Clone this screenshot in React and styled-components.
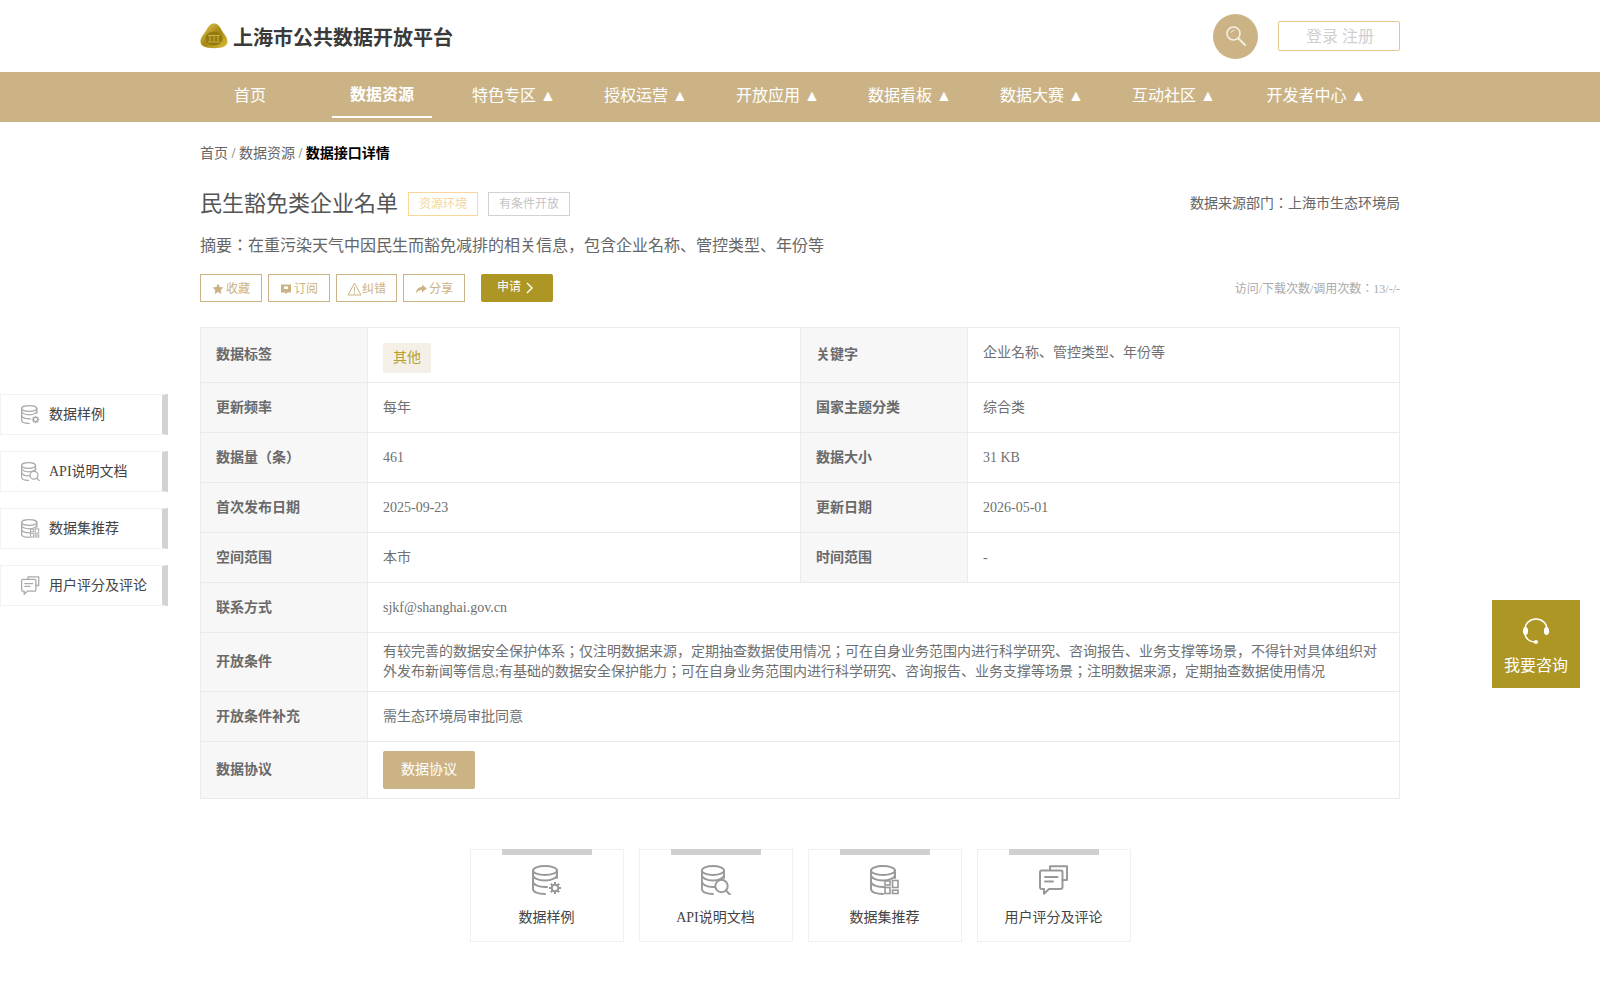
import React from "react";
import styled, { createGlobalStyle } from "styled-components";

const GOLD = "#cbb385";
const OLIVE = "#ad9623";
const BORDER = "#ebebeb";

const navItems = [
  { label: "首页" },
  { label: "数据资源", active: true },
  { label: "特色专区 ▲" },
  { label: "授权运营 ▲" },
  { label: "开放应用 ▲" },
  { label: "数据看板 ▲" },
  { label: "数据大赛 ▲" },
  { label: "互动社区 ▲" },
  { label: "开发者中心 ▲", wide: true },
];

const actions = [
  { label: "收藏", icon: "star", width: 62 },
  { label: "订阅", icon: "book", width: 62 },
  { label: "纠错", icon: "warn", width: 61, tight: true },
  { label: "分享", icon: "share", width: 62 },
];

const sections = [
  { label: "数据样例", icon: "gear" },
  { label: "API说明文档", icon: "search" },
  { label: "数据集推荐", icon: "grid" },
  { label: "用户评分及评论", icon: "chat" },
];

const Glyph = ({ name, size }) => {
  return (
    <svg width={size} height={size} viewBox="0 0 30 30" fill="none" stroke="currentColor" strokeWidth="2" strokeLinecap="round">
      {name === "chat" ? (
        <g strokeLinejoin="round">
          <path d="M11 5 V1.2 H28 V15 H23.5" />
          <path d="M2.5 5.5 H22 Q23.5 5.5 23.5 7 V22 Q23.5 24 21.5 24 H10 L5 28.8 V24 H3 Q1 24 1 22 V7 Q1 5.5 2.5 5.5 Z" />
          <path d="M6 12 H18.5 M6 16.5 H14" />
        </g>
      ) : (
        <g transform={name === "search" ? "scale(.92 1)" : undefined}>
          <ellipse cx="13" cy="5.5" rx="12" ry="4.5" />
          <path d="M1 5.5 V24 C1 27 6 29 13 29" />
          <path d="M25 5.5 V13" />
          <path d="M1 10 C1 13 6 15.5 13 15.5 C19 15.5 25 13 25 10" />
          <path d="M1 16.5 C1 19.5 6 22 13 22 L15 22" />
        </g>
      )}
      {name === "gear" && (
        <g>
          <circle cx="23" cy="23" r="6.8" fill="#fff" stroke="none" />
          <circle cx="23" cy="23" r="3.3" />
          <path strokeLinecap="butt" strokeWidth="2.2" d="M23 17v2.5M23 26.5v2.5M17 23h2.5M26.5 23h2.5M18.8 18.8l1.7 1.7M25.5 25.5l1.7 1.7M27.2 18.8l-1.7 1.7M20.5 25.5l-1.7 1.7" />
        </g>
      )}
      {name === "search" && (
        <g>
          <circle cx="20.5" cy="21" r="6.2" fill="#fff" />
          <path d="M25 25.5 L28.8 29.5" />
        </g>
      )}
      {name === "grid" && (
        <g strokeWidth="1.6" fill="#fff" strokeLinecap="butt">
          <rect x="15" y="16" width="5" height="4" />
          <rect x="22.5" y="15.5" width="5.5" height="7" />
          <rect x="15" y="22.5" width="5" height="6" />
          <rect x="22.5" y="25.2" width="5.5" height="3.3" />
        </g>
      )}
    </svg>
  );
};

const ActionGlyph = ({ name }) => {
  if (name === "star")
    return (
      <svg width="12" height="12" viewBox="0 0 12 12" fill="currentColor">
        <path d="M6 .6 7.7 4l3.8.5-2.8 2.6.7 3.8L6 9.1l-3.4 1.8.7-3.8L.5 4.5 4.3 4Z" />
      </svg>
    );
  if (name === "book")
    return (
      <svg width="12" height="12" viewBox="0 0 12 12" fill="currentColor">
        <path fillRule="evenodd" d="M1 1.5h10v8H7.5L6 11 4.5 9.5H1Zm3 2v2.5h4V3.5Z" />
      </svg>
    );
  if (name === "warn")
    return (
      <svg width="15" height="14" viewBox="0 0 15 14" fill="none" stroke="currentColor" strokeWidth="1">
        <path d="M7.5 1.2 14 13H1Z" />
        <path d="M7.5 5v4.5M7.5 10.5v1.2" />
      </svg>
    );
  return (
    <svg width="12" height="12" viewBox="0 0 12 12" fill="currentColor">
      <path d="M7 1.5 11.8 5.5 7 9.5V7C4.5 7 2.5 7.8.8 10.5 1.2 6.5 3.5 4 7 4Z" />
    </svg>
  );
};

const App = () => {
  return (
    <Page>
      <GlobalStyle />
      <Header>
        <Brand>
          <svg width="28" height="26" viewBox="0 0 28 26">
            <defs>
              <linearGradient id="logoGold" x1="0" y1="0" x2="1" y2="1">
                <stop offset="0" stopColor="#e8cf58" />
                <stop offset="0.5" stopColor="#a58712" />
                <stop offset="1" stopColor="#dcc038" />
              </linearGradient>
            </defs>
            <path d="M14 .5 C17.5 .5 19.5 3 21.5 7 C23.5 10.5 27.5 14 27.5 18.5 C27.5 23 23 25 14 25.2 C5 25 .5 23 .5 18.5 C.5 14 4.5 10.5 6.5 7 C8.5 3 10.5 .5 14 .5 Z" fill="url(#logoGold)" />
            <ellipse cx="14" cy="15.5" rx="8.5" ry="7" fill="#947a12" />
            <path d="M8 12.5 H20 M10 13 V18.5 M14 13 V18.5 M18 13 V18.5 M8 19 H20" stroke="#cfb135" strokeWidth="1" fill="none" />
          </svg>
          <BrandName>上海市公共数据开放平台</BrandName>
        </Brand>
        <HeaderRight>
          <SearchButton>
            <svg width="22" height="22" viewBox="0 0 22 22" fill="none" stroke="#f4eee0" strokeWidth="1.6" strokeLinecap="round">
              <circle cx="8.5" cy="8.5" r="6.5" />
              <path d="M6 7.5 Q6.5 5.5 9 5.5" strokeWidth="1" />
              <path d="M13.5 13.5 L20 20" strokeWidth="2" />
            </svg>
          </SearchButton>
          <LoginBox>登录 注册</LoginBox>
        </HeaderRight>
      </Header>

      <NavBar>
        <NavList>
          {navItems.map((item) => (
            <NavItem key={item.label} $active={item.active} $wide={item.wide}>
              {item.label}
            </NavItem>
          ))}
        </NavList>
      </NavBar>

      <Content>
        <Breadcrumb>
          首页 / 数据资源 / <strong>数据接口详情</strong>
        </Breadcrumb>

        <TitleRow>
          <TitleLeft>
            <Title>民生豁免类企业名单</Title>
            <TitleTag $color="#f9d79b" $text="#f5d6a0">资源环境</TitleTag>
            <TitleTag $color="#d2d2d2" $text="#c4c4c4">有条件开放</TitleTag>
          </TitleLeft>
          <Source>数据来源部门：上海市生态环境局</Source>
        </TitleRow>

        <Summary>摘要：在重污染天气中因民生而豁免减排的相关信息，包含企业名称、管控类型、年份等</Summary>

        <ActionRow>
          <Actions>
            {actions.map((a) => (
              <ActionButton key={a.label} $w={a.width} $tight={a.tight}>
                <ActionGlyph name={a.icon} />
                {a.label}
              </ActionButton>
            ))}
            <ApplyButton>
              <span>申请</span>
              <svg width="9" height="12" viewBox="0 0 9 12" fill="none" stroke="#fff" strokeWidth="1.4">
                <path d="M2 1 L7 6 L2 11" />
              </svg>
            </ApplyButton>
          </Actions>
          <Visits>访问/下载次数/调用次数：13/-/-</Visits>
        </ActionRow>

        <InfoTable>
          <colgroup>
            <col style={{ width: 167 }} />
            <col style={{ width: 433 }} />
            <col style={{ width: 167 }} />
            <col />
          </colgroup>
          <tbody>
            <Row $h={55}>
              <Th>数据标签</Th>
              <Td>
                <LabelTag>其他</LabelTag>
              </Td>
              <Th>关键字</Th>
              <Td $raise>企业名称、管控类型、年份等</Td>
            </Row>
            <Row $h={50}>
              <Th>更新频率</Th>
              <Td>每年</Td>
              <Th>国家主题分类</Th>
              <Td>综合类</Td>
            </Row>
            <Row $h={50}>
              <Th>数据量（条）</Th>
              <Td>461</Td>
              <Th>数据大小</Th>
              <Td>31 KB</Td>
            </Row>
            <Row $h={50}>
              <Th>首次发布日期</Th>
              <Td>2025-09-23</Td>
              <Th>更新日期</Th>
              <Td>2026-05-01</Td>
            </Row>
            <Row $h={50}>
              <Th>空间范围</Th>
              <Td>本市</Td>
              <Th>时间范围</Th>
              <Td>-</Td>
            </Row>
            <Row $h={50}>
              <Th>联系方式</Th>
              <Td colSpan={3}>sjkf@shanghai.gov.cn</Td>
            </Row>
            <Row $h={59}>
              <Th>开放条件</Th>
              <Td colSpan={3}>
                有较完善的数据安全保护体系；仅注明数据来源，定期抽查数据使用情况；可在自身业务范围内进行科学研究、咨询报告、业务支撑等场景，不得针对具体组织对外发布新闻等信息;有基础的数据安全保护能力；可在自身业务范围内进行科学研究、咨询报告、业务支撑等场景；注明数据来源，定期抽查数据使用情况
              </Td>
            </Row>
            <Row $h={50}>
              <Th>开放条件补充</Th>
              <Td colSpan={3}>需生态环境局审批同意</Td>
            </Row>
            <Row $h={57}>
              <Th>数据协议</Th>
              <Td colSpan={3}>
                <AgreementButton>数据协议</AgreementButton>
              </Td>
            </Row>
          </tbody>
        </InfoTable>

        <CardRow>
          {sections.map((s) => (
            <Card key={s.label}>
              <CardBar />
              <CardIcon>
                <Glyph name={s.icon} size={30} />
              </CardIcon>
              <CardLabel>{s.label}</CardLabel>
            </Card>
          ))}
        </CardRow>
      </Content>

      <SideMenu>
        {sections.map((s) => (
          <SideItem key={s.label}>
            <SideIcon>
              <Glyph name={s.icon} size={19} />
            </SideIcon>
            {s.label}
          </SideItem>
        ))}
      </SideMenu>

      <Consult>
        <svg width="28" height="28" viewBox="0 0 28 28" fill="none" stroke="#fff" strokeWidth="1.5">
          <path d="M3 13 C3 6 8 2 14 2 C20 2 25 6 25 13" />
          <path d="M3 16 C3 22 8 25 13 25" />
          <ellipse cx="3.5" cy="14" rx="2.6" ry="4" fill="#fff" stroke="none" />
          <ellipse cx="24.5" cy="14" rx="2.6" ry="4" fill="#fff" stroke="none" />
          <circle cx="14" cy="25" r="2" fill="#fff" stroke="none" />
        </svg>
        <ConsultLabel>我要咨询</ConsultLabel>
      </Consult>
    </Page>
  );
};

const GlobalStyle = createGlobalStyle`
  html, body {
    margin: 0;
    padding: 0;
    background: #fff;
    line-height: 20px;
    font-family: "Liberation Serif", "Noto Sans CJK JP", serif;
  }
  * {
    box-sizing: border-box;
  }
`;

const Page = styled.div`
  position: relative;
  width: 100%;
  min-height: 1000px;
`;

const Header = styled.div`
  width: 1200px;
  height: 72px;
  margin: 0 auto;
  display: flex;
  align-items: center;
  justify-content: space-between;
`;

const Brand = styled.div`
  display: flex;
  align-items: center;
  gap: 5px;
`;

const BrandName = styled.div`
  padding-top: 3px;
  font-size: 20px;
  font-weight: 700;
  color: #3a3a3a;
`;

const HeaderRight = styled.div`
  display: flex;
  align-items: center;
  gap: 20px;
`;

const SearchButton = styled.div`
  width: 45px;
  height: 45px;
  border-radius: 50%;
  background: ${GOLD};
  display: flex;
  align-items: center;
  justify-content: center;
`;

const LoginBox = styled.div`
  width: 122px;
  height: 30px;
  border: 1px solid #e3c88f;
  border-radius: 2px;
  font-size: 16px;
  color: #cfcfcf;
  display: flex;
  align-items: center;
  padding: 1px 0 0 27px;
`;

const NavBar = styled.div`
  height: 50px;
  background: ${GOLD};
`;

const NavList = styled.div`
  width: 1200px;
  margin: 0 auto;
  display: flex;
  transform: translateX(-16px);
`;

const NavItem = styled.div`
  position: relative;
  flex: 0 0 ${(p) => (p.$wide ? "153px" : "132px")};
  height: 50px;
  display: flex;
  align-items: center;
  justify-content: center;
  font-size: 16px;
  color: #fff;
  font-weight: ${(p) => (p.$active ? 700 : 400)};
  padding-bottom: ${(p) => (p.$active ? "5px" : "3px")};

  &::after {
    content: "";
    display: ${(p) => (p.$active ? "block" : "none")};
    position: absolute;
    left: 16px;
    right: 16px;
    bottom: 4px;
    height: 2px;
    background: #fff;
  }
`;

const Content = styled.div`
  width: 1200px;
  margin: 0 auto;
`;

const Breadcrumb = styled.div`
  margin-top: 22px;
  font-size: 14px;
  color: #666;

  strong {
    color: #000;
  }
`;

const TitleRow = styled.div`
  margin-top: 25px;
  height: 30px;
  display: flex;
  align-items: center;
  justify-content: space-between;
`;

const TitleLeft = styled.div`
  display: flex;
  align-items: center;
`;

const Title = styled.div`
  font-size: 22px;
  color: #555;
  margin-right: 10px;
`;

const TitleTag = styled.div`
  height: 24px;
  padding: 0 10px;
  margin-right: 10px;
  border: 1px solid ${(p) => p.$color};
  color: ${(p) => p.$text};
  font-size: 12px;
  display: flex;
  align-items: center;
`;

const Source = styled.div`
  font-size: 14px;
  color: #666;
`;

const Summary = styled.div`
  margin-top: 15px;
  font-size: 16px;
  line-height: 24px;
  color: #666;
`;

const ActionRow = styled.div`
  margin-top: 16px;
  display: flex;
  align-items: center;
  justify-content: space-between;
`;

const Actions = styled.div`
  display: flex;
  gap: 6px;
`;

const ActionButton = styled.div`
  width: ${(p) => p.$w}px;
  height: 28px;
  padding-top: 1px;
  border: 1px solid ${GOLD};
  color: ${GOLD};
  font-size: 12px;
  display: flex;
  align-items: center;
  justify-content: center;
  gap: ${(p) => (p.$tight ? "0" : "2px")};
`;

const ApplyButton = styled.div`
  width: 72px;
  height: 28px;
  margin-left: 10px;
  padding-right: 3px;
  background: ${OLIVE};
  border-radius: 2px;
  color: #fff;
  font-size: 12px;
  display: flex;
  align-items: center;
  justify-content: center;
  gap: 4px;

  span {
    margin-top: -3px;
  }
`;

const Visits = styled.div`
  padding-top: 1px;
  font-size: 12px;
  color: #aaa;
`;

const InfoTable = styled.table`
  width: 1200px;
  margin-top: 25px;
  border-collapse: collapse;
  table-layout: fixed;
  font-size: 14px;
`;

const Row = styled.tr`
  height: ${(p) => p.$h}px;
`;

const Th = styled.th`
  background: #f7f7f7;
  border: 1px solid ${BORDER};
  color: #6a6a6a;
  font-weight: 700;
  text-align: left;
  padding: 0 15px;
`;

const Td = styled.td`
  border: 1px solid ${BORDER};
  color: #707070;
  padding: ${(p) => (p.$raise ? "0 15px 4px" : "0 15px")};
`;

const LabelTag = styled.span`
  display: inline-flex;
  align-items: center;
  justify-content: center;
  width: 48px;
  height: 30px;
  margin-top: 6px;
  vertical-align: middle;
  border-radius: 2px;
  background: #f4f0e8;
  color: #b89f2e;
`;

const AgreementButton = styled.div`
  width: 92px;
  height: 38px;
  border-radius: 2px;
  background: ${GOLD};
  color: #fff;
  display: flex;
  align-items: center;
  justify-content: center;
`;

const CardRow = styled.div`
  margin-top: 50px;
  display: flex;
  justify-content: center;
  gap: 15px;
`;

const Card = styled.div`
  position: relative;
  width: 154px;
  height: 93px;
  border: 1px solid #f0f0f0;
  display: flex;
  flex-direction: column;
  align-items: center;
`;

const CardBar = styled.div`
  position: absolute;
  top: -1px;
  left: 31px;
  width: 90px;
  height: 6px;
  background: #d0d0d0;
`;

const CardIcon = styled.div`
  margin-top: 15px;
  height: 30px;
  color: #999;
`;

const CardLabel = styled.div`
  margin-top: 13px;
  font-size: 14px;
  color: #444;
`;

const SideMenu = styled.div`
  position: absolute;
  left: 0;
  top: 394px;
  display: flex;
  flex-direction: column;
  gap: 16px;
`;

const SideItem = styled.div`
  width: 168px;
  height: 41px;
  padding-left: 20px;
  border: 1px solid #f3f3f3;
  border-right: 6px solid #d3d3d3;
  background: #fff;
  font-size: 14px;
  color: #444;
  display: flex;
  align-items: center;
  gap: 9px;
`;

const SideIcon = styled.span`
  display: flex;
  color: #aaa;
`;

const Consult = styled.div`
  position: absolute;
  left: 1492px;
  top: 600px;
  width: 88px;
  height: 88px;
  background: ${OLIVE};
  color: #fff;
  display: flex;
  flex-direction: column;
  align-items: center;
  padding-top: 17px;
`;

const ConsultLabel = styled.div`
  margin-top: 11px;
  font-size: 16px;
`;

export default App;
